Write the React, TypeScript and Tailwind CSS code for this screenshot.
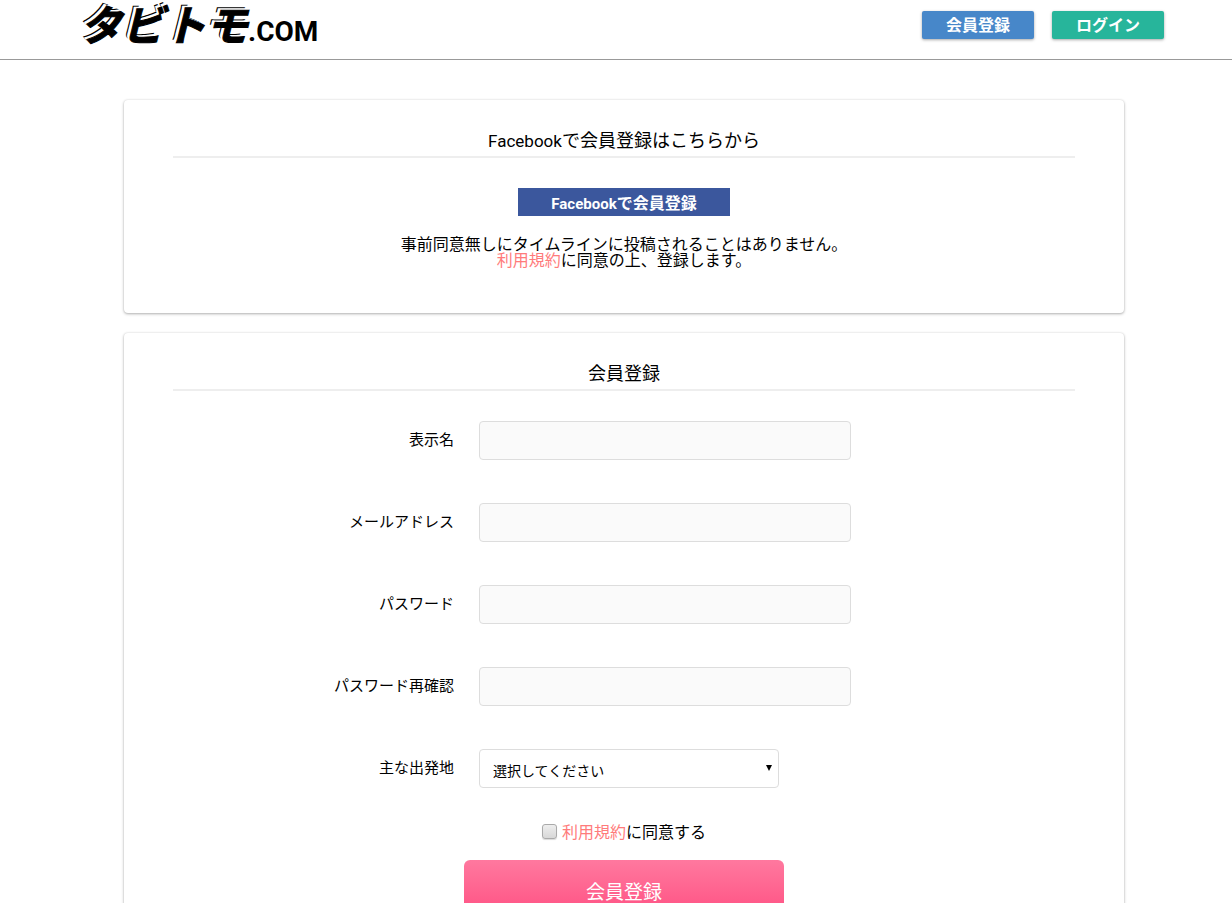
import React, { useState } from 'react';

interface Field {
  id: string;
  label: string;
  type: string;
}

const fields: Field[] = [
  { id: 'name', label: '表示名', type: 'text' },
  { id: 'email', label: 'メールアドレス', type: 'email' },
  { id: 'password', label: 'パスワード', type: 'password' },
  { id: 'password-confirm', label: 'パスワード再確認', type: 'password' },
];

const Logo = () => (
  <a href="#" className="flex items-baseline leading-none text-black">
    <span className="font-['Noto_Sans_CJK_JP',sans-serif] text-[42px] leading-[46px] font-bold italic [-webkit-text-stroke:1px_#000] [text-shadow:-1px_-1px_0_#fff,-2px_-1px_0_#fff,-3px_-2px_0_#fff,-4px_-3px_0_#000]">
      タビトモ
    </span>
    <span className="font-[Roboto,sans-serif] text-[28px] leading-[28px] font-bold">.COM</span>
  </a>
);

const Card = ({ title, children }: { title: React.ReactNode; children: React.ReactNode }) => (
  <section className="rounded-[4px] bg-white px-[49px] pt-[30px] pb-[45px] shadow-[0_0_2px_rgba(0,0,0,0.1),0_1px_3px_rgba(0,0,0,0.3)]">
    <h2 className="border-b-2 border-[#eee] pb-2 text-center text-lg leading-[18px]">{title}</h2>
    {children}
  </section>
);

const App: React.FC = () => {
  const [agreed, setAgreed] = useState(false);

  return (
    <div className="min-h-screen bg-white font-['Noto_Sans_CJK_JP',sans-serif] text-base leading-4 text-black">
      {/* Header */}
      <header className="flex h-[60px] items-start justify-between border-b border-[#999] pr-[68px] pl-20">
        <Logo />
        <nav className="flex gap-[18px] pt-[11px]">
          <a
            href="#"
            className="flex h-7 w-28 items-center justify-center rounded-[2px] bg-[#4787c9] pb-0.5 font-bold text-white shadow-[0_1px_3px_rgba(0,0,0,0.35)]"
          >
            会員登録
          </a>
          <a
            href="#"
            className="flex h-7 w-28 items-center justify-center rounded-[2px] bg-[#27b59b] pb-0.5 font-bold text-white shadow-[0_1px_3px_rgba(0,0,0,0.35)]"
          >
            ログイン
          </a>
        </nav>
      </header>

      <main className="pt-10 pb-10 pl-4">
        <div className="mx-auto flex max-w-[1000px] flex-col gap-5">
          {/* Facebook */}
          <Card
            title={
              <>
                <span className="font-[Roboto,sans-serif] text-[17px] leading-3">Facebook</span>で会員登録はこちらから
              </>
            }
          >
            <button
              type="button"
              className="mx-auto mt-[30px] block h-7 w-[212px] bg-[#3b579d] leading-4 font-bold text-white"
            >
              <span className="font-[Roboto,sans-serif] text-[15px] leading-3">Facebook</span>で会員登録
            </button>
            <p className="mt-[19px] mb-px text-center">
              事前同意無しにタイムラインに投稿されることはありません。
              <br />
              <a href="#" className="text-[#ff7b7b]">利用規約</a>に同意の上、登録します。
            </p>
          </Card>

          {/* Registration form */}
          <Card title="会員登録">
            <form className="mt-[30px]" onSubmit={(e) => e.preventDefault()}>
              <div className="flex flex-col gap-[43px]">
                {fields.map((field) => (
                  <div key={field.id} className="grid grid-cols-[281px_1fr] items-center gap-[25px]">
                    <label htmlFor={field.id} className="pb-1 text-right text-[15px]">
                      {field.label}
                    </label>
                    <input
                      id={field.id}
                      type={field.type}
                      className="h-[39px] w-full max-w-[372px] rounded-[4px] border border-[#ddd] bg-[#fafafa] px-3 text-sm"
                    />
                  </div>
                ))}
                <div className="grid grid-cols-[281px_1fr] items-center gap-[25px]">
                  <label htmlFor="departure" className="pb-1 text-right text-[15px]">
                    主な出発地
                  </label>
                  <div className="relative w-full max-w-[300px]">
                    <select
                      id="departure"
                      className="block h-[39px] w-full appearance-none rounded-[4px] border border-[#ddd] bg-white px-[13px] pt-0.5 text-sm"
                    >
                      <option>選択してください</option>
                    </select>
                    <svg
                      viewBox="0 0 6 6"
                      className="pointer-events-none absolute top-4 right-[7px] size-[6px]"
                    >
                      <path d="M0 0h6L3 6z" />
                    </svg>
                  </div>
                </div>
              </div>

              <div className="mt-[35px] flex items-center justify-center gap-[5px]">
                <input
                  id="agree"
                  type="checkbox"
                  checked={agreed}
                  onChange={(e) => setAgreed(e.target.checked)}
                  className="size-[15px] appearance-none rounded-[3px] border border-[#aaa] bg-linear-to-b from-[#eee] to-[#d8d8d8] shadow-[0_1px_1px_rgba(0,0,0,0.15)] checked:from-[#888] checked:to-[#666]"
                />
                <label htmlFor="agree">
                  <a href="#" className="text-[#ff7b7b]">利用規約</a>に同意する
                </label>
              </div>

              <button
                type="submit"
                className="mx-auto mt-[21px] block h-[62px] w-full max-w-[320px] rounded-[6px] bg-linear-to-b from-[#ff789f] to-[#ff4a80] text-[19px] text-white"
              >
                会員登録
              </button>
            </form>
          </Card>
        </div>
      </main>
    </div>
  );
};

export default App;
